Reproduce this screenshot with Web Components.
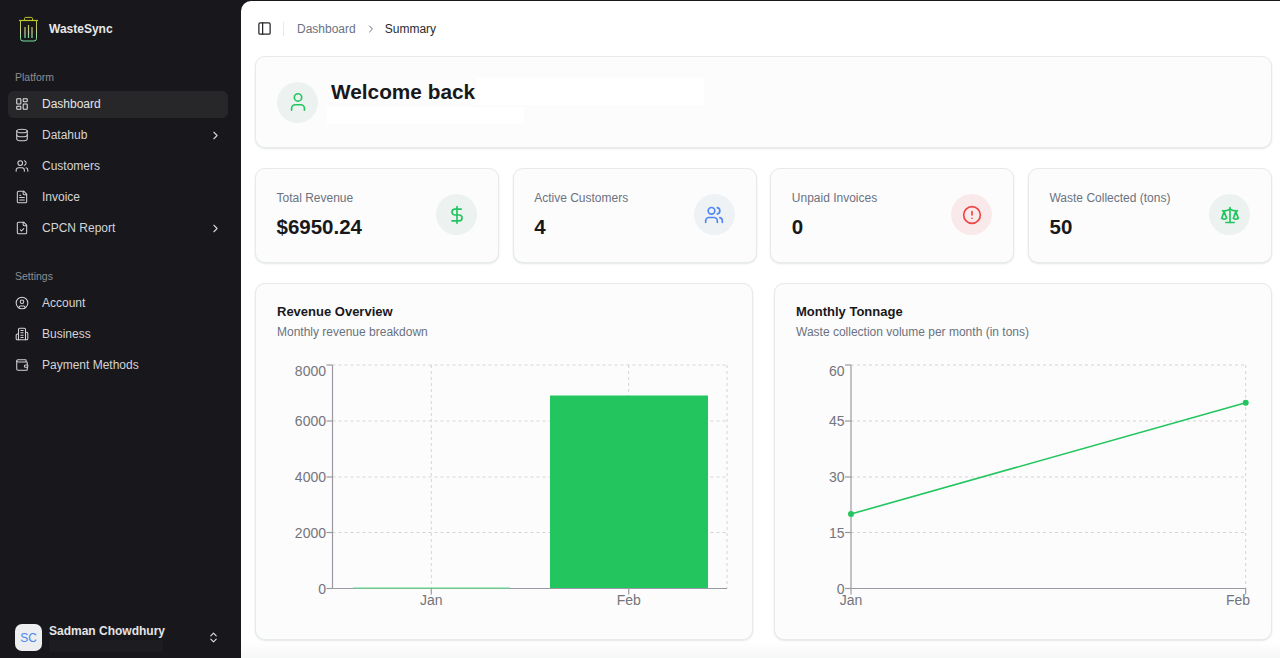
<!DOCTYPE html>
<html lang="en">
<head>
<meta charset="utf-8">
<title>WasteSync</title>
<style>
  html, body { margin: 0; height: 100%; overflow: hidden; background: #18181c; }
  body { font-family: "Liberation Sans", Arial, sans-serif; }
</style>
</head>
<body>
<app-shell>
  <side-bar slot="side">
    <brand-logo>WasteSync</brand-logo>
    <nav-section label="Platform">
      <nav-item icon="dashboard" active>Dashboard</nav-item>
      <nav-item icon="database" more>Datahub</nav-item>
      <nav-item icon="users">Customers</nav-item>
      <nav-item icon="file">Invoice</nav-item>
      <nav-item icon="filecheck" more>CPCN Report</nav-item>
    </nav-section>
    <nav-section label="Settings">
      <nav-item icon="account">Account</nav-item>
      <nav-item icon="building">Business</nav-item>
      <nav-item icon="wallet">Payment Methods</nav-item>
    </nav-section>
    <user-footer initials="SC">Sadman Chowdhury</user-footer>
  </side-bar>
  <top-bar></top-bar>
  <welcome-card>Welcome back</welcome-card>
  <stat-row>
    <stat-card label="Total Revenue" icon="dollar" tone="green">$6950.24</stat-card>
    <stat-card label="Active Customers" icon="users" tone="blue">4</stat-card>
    <stat-card label="Unpaid Invoices" icon="alert" tone="red">0</stat-card>
    <stat-card label="Waste Collected (tons)" icon="scale" tone="green">50</stat-card>
  </stat-row>
  <chart-row>
    <chart-card heading="Revenue Overview" sub="Monthly revenue breakdown"><revenue-chart></revenue-chart></chart-card>
    <chart-card heading="Monthly Tonnage" sub="Waste collection volume per month (in tons)"><tonnage-chart></tonnage-chart></chart-card>
  </chart-row>
</app-shell>

<script>
const ICONS = {
  dashboard: '<rect x="3" y="3" width="7" height="9" rx="1"/><rect x="14" y="3" width="7" height="5" rx="1"/><rect x="14" y="12" width="7" height="9" rx="1"/><rect x="3" y="16" width="7" height="5" rx="1"/>',
  database: '<ellipse cx="12" cy="5" rx="9" ry="3"/><path d="M3 5V19A9 3 0 0 0 21 19V5"/><path d="M3 12A9 3 0 0 0 21 12"/>',
  users: '<path d="M16 21v-2a4 4 0 0 0-4-4H6a4 4 0 0 0-4 4v2"/><circle cx="9" cy="7" r="4"/><path d="M22 21v-2a4 4 0 0 0-3-3.87"/><path d="M16 3.13a4 4 0 0 1 0 7.75"/>',
  file: '<path d="M15 2H6a2 2 0 0 0-2 2v16a2 2 0 0 0 2 2h12a2 2 0 0 0 2-2V7Z"/><path d="M14 2v4a2 2 0 0 0 2 2h4"/><path d="M10 9H8"/><path d="M16 13H8"/><path d="M16 17H8"/>',
  filecheck: '<path d="M15 2H6a2 2 0 0 0-2 2v16a2 2 0 0 0 2 2h12a2 2 0 0 0 2-2V7Z"/><path d="M14 2v4a2 2 0 0 0 2 2h4"/><path d="m9 15 2 2 4-4"/>',
  account: '<circle cx="12" cy="12" r="10"/><circle cx="12" cy="10" r="3"/><path d="M7 20.662V19a2 2 0 0 1 2-2h6a2 2 0 0 1 2 2v1.662"/>',
  building: '<path d="M6 22V4a2 2 0 0 1 2-2h8a2 2 0 0 1 2 2v18Z"/><path d="M6 12H4a2 2 0 0 0-2 2v6a2 2 0 0 0 2 2h2"/><path d="M18 9h2a2 2 0 0 1 2 2v9a2 2 0 0 1-2 2h-2"/><path d="M10 6h4"/><path d="M10 10h4"/><path d="M10 14h4"/><path d="M10 18h4"/>',
  wallet: '<path d="M19 7V4a1 1 0 0 0-1-1H5a2 2 0 0 0 0 4h15a1 1 0 0 1 1 1v4h-3a2 2 0 0 0 0 4h3a1 1 0 0 0 1-1v-2a1 1 0 0 0-1-1"/><path d="M3 5v14a2 2 0 0 0 2 2h15a1 1 0 0 0 1-1v-4"/>',
  chevronRight: '<path d="m9 18 6-6-6-6"/>',
  upDown: '<path d="m7 15 5 5 5-5"/><path d="m7 9 5-5 5 5"/>',
  panel: '<rect x="3" y="3" width="18" height="18" rx="2"/><path d="M9 3v18"/>',
  user: '<path d="M19 21v-2a4 4 0 0 0-4-4H9a4 4 0 0 0-4 4v2"/><circle cx="12" cy="7" r="4"/>',
  dollar: '<path d="M12 2v20"/><path d="M17 5H9.5a3.5 3.5 0 0 0 0 7h5a3.5 3.5 0 0 1 0 7H6"/>',
  alert: '<circle cx="12" cy="12" r="10"/><path d="M12 8v4"/><path d="M12 16h.01"/>',
  scale: '<path d="m16 16 3-8 3 8c-.87.65-1.92 1-3 1s-2.13-.35-3-1Z"/><path d="m2 16 3-8 3 8c-.87.65-1.92 1-3 1s-2.13-.35-3-1Z"/><path d="M7 21h10"/><path d="M12 3v18"/><path d="M3 7h2c2 0 5-1 7-2 2 1 5 2 7 2h2"/>'
};

function icon(name, size, width = 2) {
  return `<svg width="${size}" height="${size}" viewBox="0 0 24 24" fill="none" stroke="currentColor" stroke-width="${width}" stroke-linecap="round" stroke-linejoin="round">${ICONS[name]}</svg>`;
}

// small helper so every element below only declares its markup
class ShadowElement extends HTMLElement {
  constructor() {
    super();
    this.attachShadow({ mode: 'open' });
  }

  connectedCallback() {
    this.shadowRoot.innerHTML = this.render();
  }
}

class AppShell extends ShadowElement {
  render() {
    return `
      <style>
        :host { display: flex; height: 100vh; width: 100vw; background: #18181c; }
        main {
          flex: 1; min-width: 0; margin-top: 1px; box-sizing: border-box;
          padding: 0 8px 0 14px; border-top-left-radius: 10px;
          background: linear-gradient(#fff 640px, #f6f7f7 657px);
          display: flex; flex-direction: column; overflow: hidden;
        }
      </style>
      <slot name="side"></slot>
      <main><slot></slot></main>
    `;
  }
}

class SideBar extends ShadowElement {
  render() {
    return `
      <style>
        :host {
          display: flex; flex-direction: column; flex: none; width: 241px; height: 100%;
          box-sizing: border-box; padding: 0 13px 6px 8px; background: #18181c;
        }
      </style>
      <slot></slot>
    `;
  }
}

class BrandLogo extends ShadowElement {
  render() {
    return `
      <style>
        :host {
          display: flex; align-items: center; gap: 10px; height: 58px; flex: none;
          padding-left: 10px; margin-bottom: 10px;
          font-size: 12px; font-weight: 700; color: #e8e8ea;
        }
        svg { display: block; }
      </style>
      <svg width="21" height="26" viewBox="0 0 21 26" fill="none">
        <defs>
          <linearGradient id="can" x1="0" y1="0" x2="0" y2="1">
            <stop offset="0" stop-color="#b9c42f"/>
            <stop offset=".55" stop-color="#c9cfa0"/>
            <stop offset="1" stop-color="#6fe3a0"/>
          </linearGradient>
        </defs>
        <path d="M1 4.500h19" stroke="#bcc62c" stroke-width="1.200"/>
        <path d="M6.500 4.300V2.600q0-1.200 1.200-1.200h5.600q1.200 0 1.200 1.200v1.700" stroke="#bcc62c" stroke-width="1"/>
        <path d="M2.500 5v17.500q0 2.500 2.500 2.500h11q2.500 0 2.500-2.500V5" stroke="url(#can)" stroke-width="1"/>
        <path d="M7 11v11M10.500 9v13M14 11v11" stroke="url(#can)" stroke-width="1.200"/>
      </svg>
      <slot></slot>
    `;
  }
}

class NavSection extends ShadowElement {
  render() {
    return `
      <style>
        :host { display: flex; flex-direction: column; gap: 4px; flex: none; margin-bottom: 25px; }
        .label { height: 18px; line-height: 18px; padding-left: 7px; margin-bottom: 1px; font-size: 10.5px; color: #8c8c92; }
      </style>
      <div class="label">${this.getAttribute('label')}</div>
      <slot></slot>
    `;
  }
}

class NavItem extends ShadowElement {
  render() {
    const more = this.hasAttribute('more') ? `<span class="more">${icon('chevronRight', 13)}</span>` : '';
    return `
      <style>
        :host {
          display: flex; align-items: center; gap: 13px; height: 27px; box-sizing: border-box;
          padding: 0 6px 1px 7px; border-radius: 6px;
          font-size: 12px; color: #d4d4d8;
        }
        :host([active]) { background: #27272a; color: #e4e4e7; }
        svg { display: block; }
        .more { margin-left: auto; }
      </style>
      ${icon(this.getAttribute('icon'), 14, 1.8)}
      <span><slot></slot></span>
      ${more}
    `;
  }
}

class UserFooter extends ShadowElement {
  render() {
    return `
      <style>
        :host { display: flex; align-items: center; margin-top: auto; padding-left: 7px; flex: none; }
        .avatar {
          width: 27px; height: 27px; border-radius: 7px; background: #eceef0; color: #4f86f0;
          display: flex; align-items: center; justify-content: center; font-size: 12px; flex: none;
        }
        .who { margin-left: 7px; width: 158px; padding-top: 1px; }
        .name { font-size: 12px; font-weight: 700; color: #e4e4e7; line-height: 15px; }
        .mail { height: 12px; width: 114px; margin-top: 1px; background: #1d1d21; }
        svg { display: block; }
      </style>
      <div class="avatar">${this.getAttribute('initials')}</div>
      <div class="who"><div class="name"><slot></slot></div><div class="mail"></div></div>
      <span style="color:#e4e4e7">${icon('upDown', 13)}</span>
    `;
  }
}

class TopBar extends ShadowElement {
  render() {
    return `
      <style>
        :host {
          display: flex; align-items: center; height: 55px; flex: none;
          font-size: 12px; color: #6b7280;
        }
        svg { display: block; }
        .panel { color: #26262a; margin-left: 2px; }
        .rule { width: 1px; height: 14px; background: #e8e8ea; margin: 0 13px 0 11px; }
        .sep { margin: 0 8px 0 9px; color: #6b7280; }
        .here { color: #2a2a2e; }
      </style>
      <span class="panel">${icon('panel', 15)}</span>
      <span class="rule"></span>
      <span>Dashboard</span>
      <span class="sep">${icon('chevronRight', 12)}</span>
      <span class="here">Summary</span>
    `;
  }
}

const CARD_CSS = `
  background: #fcfcfc; border: 1px solid #e6eaea; border-radius: 10px;
  box-shadow: 0 1px 2px rgba(30, 50, 50, .12); box-sizing: border-box;
`;

class WelcomeCard extends ShadowElement {
  render() {
    return `
      <style>
        :host {
          display: flex; align-items: center; height: 92px; flex: none; padding-left: 21px;
          ${CARD_CSS}
        }
        .badge {
          width: 41px; height: 41px; border-radius: 50%; background: #ecf2f0; color: #22c55e;
          display: flex; align-items: center; justify-content: center; flex: none;
        }
        .text { margin-left: 9px; margin-bottom: 3px; }
        .title { display: flex; align-items: center; margin-left: 4px; }
        h1 { margin: 0; font-size: 20.8px; font-weight: 700; color: #18181b; line-height: 27px; }
        .mask-a { width: 228px; height: 27px; background: #fff; margin-left: 1px; }
        .mask-b { width: 197px; height: 17px; background: #fff; margin-top: 2px; }
      </style>
      <div class="badge">${icon('user', 22, 1.8)}</div>
      <div class="text">
        <div class="title"><h1><slot></slot></h1><div class="mask-a"></div></div>
        <div class="mask-b"></div>
      </div>
    `;
  }
}

class StatRow extends ShadowElement {
  render() {
    return `
      <style>
        :host { display: grid; grid-template-columns: repeat(4, minmax(0, 1fr)); column-gap: 13.67px; margin-top: 20px; flex: none; }
      </style>
      <slot></slot>
    `;
  }
}

const TONES = {
  green: ['#ecf2f0', '#22c55e'],
  blue: ['#eef2f5', '#4f86f7'],
  red: ['#f9e9ea', '#ef4444']
};

class StatCard extends ShadowElement {
  render() {
    const [bg, fg] = TONES[this.getAttribute('tone')];
    return `
      <style>
        :host {
          display: flex; align-items: center; justify-content: space-between; height: 95px;
          padding: 0 21px 2px 20.5px; ${CARD_CSS}
        }
        .label { font-size: 12px; color: #6b7280; line-height: 16px; }
        .value { font-size: 20.5px; font-weight: 700; color: #18181b; line-height: 24px; margin-top: 9px; }
        .badge {
          width: 41px; height: 41px; border-radius: 50%; background: ${bg}; color: ${fg};
          display: flex; align-items: center; justify-content: center; flex: none;
        }
      </style>
      <div>
        <div class="label">${this.getAttribute('label')}</div>
        <div class="value"><slot></slot></div>
      </div>
      <div class="badge">${icon(this.getAttribute('icon'), 20)}</div>
    `;
  }
}

class ChartRow extends ShadowElement {
  render() {
    return `
      <style>
        :host { display: grid; grid-template-columns: repeat(2, minmax(0, 1fr)); column-gap: 21px; margin-top: 20px; flex: none; }
      </style>
      <slot></slot>
    `;
  }
}

class ChartCard extends ShadowElement {
  render() {
    return `
      <style>
        :host { display: block; height: 357px; padding: 19px 21px 0; ${CARD_CSS} }
        h2 { margin: 0; font-size: 13px; font-weight: 700; color: #18181b; line-height: 18px; }
        p { margin: 3px 0 0; font-size: 12px; color: #6b7280; line-height: 16px; }
        .plot { margin: 11px 0 0 -22px; }
      </style>
      <h2>${this.getAttribute('heading')}</h2>
      <p>${this.getAttribute('sub')}</p>
      <div class="plot"><slot></slot></div>
    `;
  }
}

// chart geometry is written in page coordinates, the viewBox maps it to the card
const ROWS = [365, 421, 477, 532.5];
const BASE = 588.5;
const GRID = 'stroke="#d4d4d6" stroke-dasharray="3 3"';
const AXIS = 'stroke="#9a9aa2" stroke-width="1.2"';

function yAxis(x, right, labels) {
  const lines = ROWS.map(y => `<line x1="${x}" x2="${right}" y1="${y}" y2="${y}" ${GRID}/>`).join('');
  const ticks = [...ROWS, BASE].map((y, i) => {
    const ty = i === 0 ? 376 : y + 5;
    return `<line x1="${x - 6}" x2="${x}" y1="${y}" y2="${y}" ${AXIS}/><text x="${x - 6.5}" y="${ty}" text-anchor="end">${labels[i]}</text>`;
  }).join('');
  return { lines, ticks };
}

function chartSvg(originX, body) {
  return `
    <style>
      :host { display: block; }
      svg { display: block; }
      text { font-family: "Liberation Sans", Arial, sans-serif; font-size: 14px; fill: #74747c; }
    </style>
    <svg width="498" height="280" viewBox="${originX} 351 498 280">${body}</svg>
  `;
}

class RevenueChart extends ShadowElement {
  render() {
    const x = 332.5, right = 727;
    const axis = yAxis(x, right, ['8000', '6000', '4000', '2000', '0']);
    return chartSvg(255, `
      ${axis.lines}
      <line x1="431.3" x2="431.3" y1="365" y2="${BASE}" ${GRID}/>
      <line x1="628.7" x2="628.7" y1="365" y2="${BASE}" ${GRID}/>
      <line x1="${right}" x2="${right}" y1="365" y2="${BASE}" ${GRID}/>
      <rect x="550" y="395.500" width="158" height="193" fill="#22c55e"/>
      <line x1="${x}" x2="${x}" y1="365" y2="${BASE}" ${AXIS}/>
      <line x1="${x}" x2="${right}" y1="${BASE}" y2="${BASE}" ${AXIS}/>
      <rect x="353" y="587.500" width="157" height="1.200" fill="#5fd68a"/>
      ${axis.ticks}
      <line x1="431.3" x2="431.3" y1="${BASE}" y2="594.500" ${AXIS}/>
      <line x1="628.7" x2="628.7" y1="${BASE}" y2="594.500" ${AXIS}/>
      <text x="431.3" y="605" text-anchor="middle">Jan</text>
      <text x="628.7" y="605" text-anchor="middle">Feb</text>
    `);
  }
}

class TonnageChart extends ShadowElement {
  render() {
    const x = 851, right = 1245.7;
    const axis = yAxis(x, right, ['60', '45', '30', '15', '0']);
    return chartSvg(774, `
      ${axis.lines}
      <line x1="${right}" x2="${right}" y1="365" y2="${BASE}" ${GRID}/>
      <line x1="${x}" x2="${x}" y1="365" y2="${BASE}" ${AXIS}/>
      <line x1="${x}" x2="${right}" y1="${BASE}" y2="${BASE}" ${AXIS}/>
      ${axis.ticks}
      <line x1="${x}" x2="${x}" y1="${BASE}" y2="594.500" ${AXIS}/>
      <line x1="${right}" x2="${right}" y1="${BASE}" y2="594.500" ${AXIS}/>
      <text x="${x}" y="605" text-anchor="middle">Jan</text>
      <text x="1250" y="605" text-anchor="end">Feb</text>
      <line x1="${x}" y1="514" x2="${right}" y2="402.700" stroke="#22c55e" stroke-width="1.600"/>
      <circle cx="${x}" cy="514" r="3" fill="#22c55e"/>
      <circle cx="${right}" cy="402.700" r="3" fill="#22c55e"/>
    `);
  }
}

customElements.define('app-shell', AppShell);
customElements.define('side-bar', SideBar);
customElements.define('brand-logo', BrandLogo);
customElements.define('nav-section', NavSection);
customElements.define('nav-item', NavItem);
customElements.define('user-footer', UserFooter);
customElements.define('top-bar', TopBar);
customElements.define('welcome-card', WelcomeCard);
customElements.define('stat-row', StatRow);
customElements.define('stat-card', StatCard);
customElements.define('chart-row', ChartRow);
customElements.define('chart-card', ChartCard);
customElements.define('revenue-chart', RevenueChart);
customElements.define('tonnage-chart', TonnageChart);
</script>
</body>
</html>
